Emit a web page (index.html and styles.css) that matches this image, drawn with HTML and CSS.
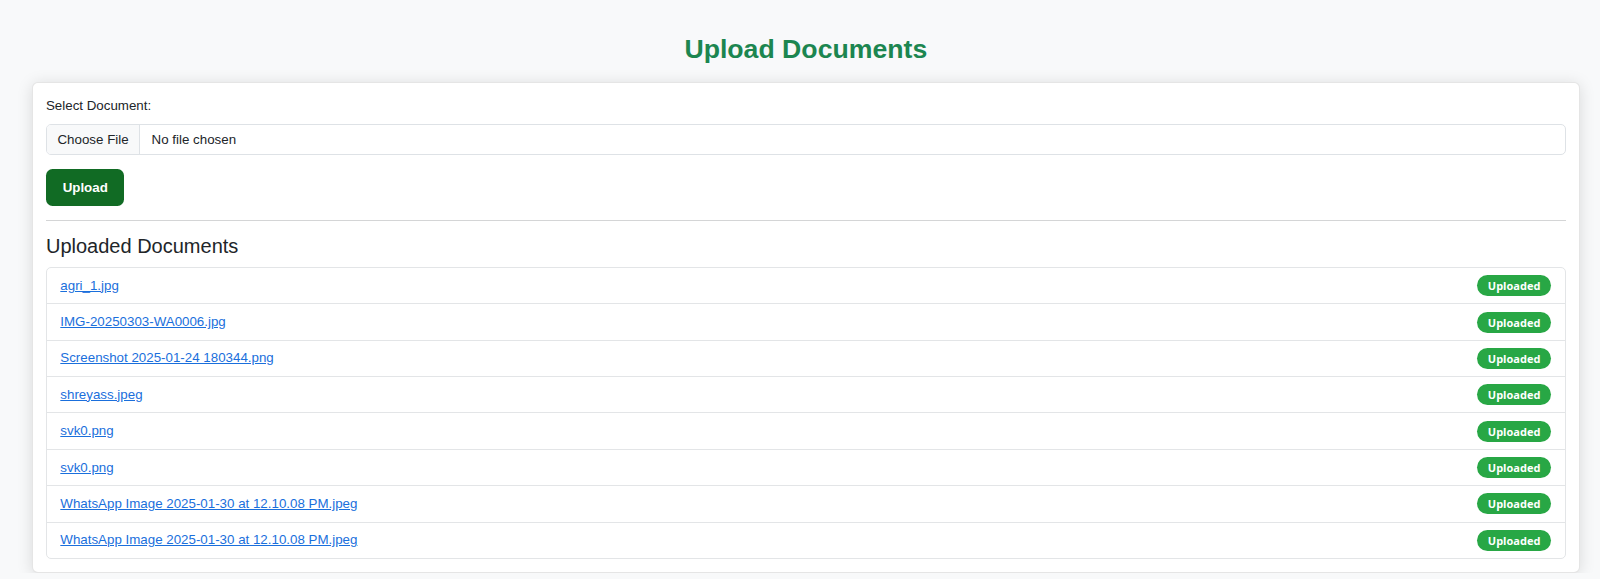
FILE: index.html
```html
<!DOCTYPE html>
<html lang="en">
<head>
<meta charset="utf-8">
<title>Upload Documents</title>
<link rel="stylesheet" href="styles.css">
</head>
<body>
<div class="page">
  <h1 class="title">Upload Documents</h1>
  <div class="card">
    <div class="card-body">
      <label class="form-label">Select Document:</label>
      <div class="file-input">
        <span class="file-btn">Choose File</span>
        <span class="file-name">No file chosen</span>
      </div>
      <button class="btn-upload" type="button">Upload</button>
      <hr class="divider">
      <h4 class="section-title">Uploaded Documents</h4>
      <ul class="doc-list">
        <li class="doc-item"><a href="#">agri_1.jpg</a><span class="badge">Uploaded</span></li>
        <li class="doc-item"><a href="#">IMG-20250303-WA0006.jpg</a><span class="badge">Uploaded</span></li>
        <li class="doc-item"><a href="#">Screenshot 2025-01-24 180344.png</a><span class="badge">Uploaded</span></li>
        <li class="doc-item"><a href="#">shreyass.jpeg</a><span class="badge">Uploaded</span></li>
        <li class="doc-item"><a href="#">svk0.png</a><span class="badge">Uploaded</span></li>
        <li class="doc-item"><a href="#">svk0.png</a><span class="badge">Uploaded</span></li>
        <li class="doc-item"><a href="#">WhatsApp Image 2025-01-30 at 12.10.08 PM.jpeg</a><span class="badge">Uploaded</span></li>
        <li class="doc-item"><a href="#">WhatsApp Image 2025-01-30 at 12.10.08 PM.jpeg</a><span class="badge">Uploaded</span></li>
      </ul>
    </div>
  </div>
</div>
</body>
</html>
```
FILE: styles.css
```css
* { box-sizing: border-box; }
html, body { margin: 0; padding: 0; }
body {
  background: #f8f9fa;
  font-family: "Liberation Sans", Arial, sans-serif;
  font-size: 13.33px;
  line-height: 20px;
  color: #212529;
  overflow: hidden;
}
.page {
  padding: 32.5px 20px 0 31.67px;
}
.title {
  margin: 0 0 17.5px;
  font-size: 26.67px;
  line-height: 32px;
  font-weight: bold;
  text-align: center;
  color: #1c8650;
}
.card {
  background: #fff;
  border: 1px solid rgba(0,0,0,0.1);
  border-radius: 6px;
  box-shadow: 0 2px 16px rgba(0,0,0,0.13);
}
.card-body {
  padding: 13.33px;
}
.form-label {
  display: block;
  margin-bottom: 7.5px;
}
.file-input {
  display: flex;
  align-items: stretch;
  height: 31.67px;
  border: 1px solid #dee2e6;
  border-radius: 5px;
  overflow: hidden;
  margin-bottom: 14px;
}
.file-btn {
  display: flex;
  align-items: center;
  padding: 0 10px 0 10.5px;
  background: #f8f9fa;
  border-right: 1px solid #dee2e6;
  margin-right: 12px;
}
.file-name {
  display: flex;
  align-items: center;
}
.btn-upload {
  display: block;
  padding: 8.33px 16.67px;
  font-family: "Liberation Sans", Arial, sans-serif;
  font-size: 13.33px;
  line-height: 20px;
  font-weight: bold;
  color: #fff;
  background: #116b24;
  border: 0;
  border-radius: 6.5px;
}
.divider {
  margin: 14px 0 13.33px;
  border: 0;
  border-top: 1px solid #d4d5d6;
}
.section-title {
  margin: 0 0 8.5px;
  font-size: 20px;
  line-height: 24px;
  font-weight: normal;
}
.doc-list {
  list-style: none;
  margin: 0;
  padding: 0;
  border: 1px solid #e3e5e7;
  border-radius: 5px;
}
.doc-item {
  display: flex;
  justify-content: space-between;
  align-items: center;
  padding: 7.2px 13.33px;
  border-bottom: 1px solid #e3e5e7;
}
.doc-item:last-child { border-bottom: 0; }
.doc-item a {
  color: #1a6fdc;
  text-decoration: underline;
}
.badge {
  display: inline-block;
  font-family: "Open Sans", "Noto Sans", sans-serif;
  font-size: 11px;
  line-height: 13px;
  font-weight: bold;
  color: #fff;
  background: #28a745;
  padding: 4px 11px;
  border-radius: 11px;
}
```
